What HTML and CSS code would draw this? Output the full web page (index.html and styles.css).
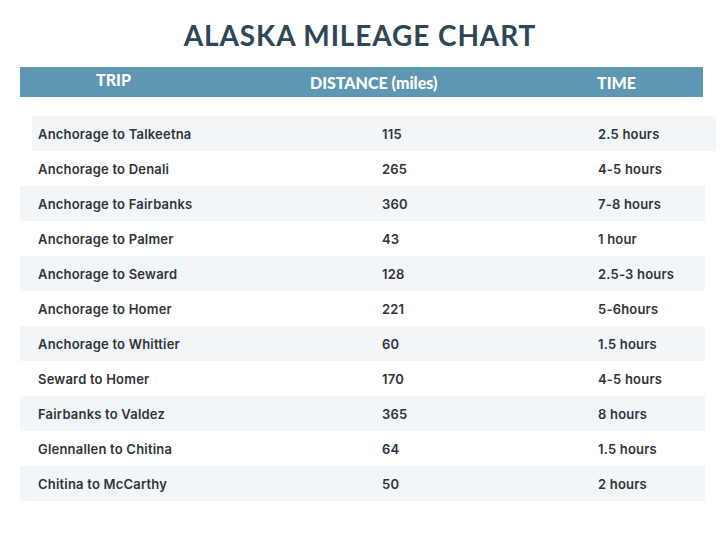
FILE: index.html
```html
<!DOCTYPE html>
<html>
<head>
<meta charset="utf-8">
<link rel="stylesheet" href="styles.css">
</head>
<body>
<div class="page">
  <h1 class="title">ALASKA MILEAGE CHART</h1>
  <div class="head">
    <div class="h-trip">TRIP</div>
    <div class="h-dist">DISTANCE (miles)</div>
    <div class="h-time">TIME</div>
  </div>
  <div class="rows">
    <div class="row alt r1"><span class="trip">Anchorage to Talkeetna</span><span class="dist">115</span><span class="time">2.5 hours</span></div>
    <div class="row"><span class="trip">Anchorage to Denali</span><span class="dist">265</span><span class="time">4-5 hours</span></div>
    <div class="row alt"><span class="trip">Anchorage to Fairbanks</span><span class="dist">360</span><span class="time">7-8 hours</span></div>
    <div class="row"><span class="trip">Anchorage to Palmer</span><span class="dist">43</span><span class="time">1 hour</span></div>
    <div class="row alt"><span class="trip">Anchorage to Seward</span><span class="dist">128</span><span class="time">2.5-3 hours</span></div>
    <div class="row"><span class="trip">Anchorage to Homer</span><span class="dist">221</span><span class="time">5-6hours</span></div>
    <div class="row alt"><span class="trip">Anchorage to Whittier</span><span class="dist">60</span><span class="time">1.5 hours</span></div>
    <div class="row"><span class="trip">Seward to Homer</span><span class="dist">170</span><span class="time">4-5 hours</span></div>
    <div class="row alt"><span class="trip">Fairbanks to Valdez</span><span class="dist">365</span><span class="time">8 hours</span></div>
    <div class="row"><span class="trip">Glennallen to Chitina</span><span class="dist">64</span><span class="time">1.5 hours</span></div>
    <div class="row alt"><span class="trip">Chitina to McCarthy</span><span class="dist">50</span><span class="time">2 hours</span></div>
  </div>
</div>
</body>
</html>
```
FILE: styles.css
```css
* { box-sizing: border-box; }
html, body { margin: 0; padding: 0; background: #ffffff; }
.page { width: 720px; height: 539px; overflow: hidden; }
.title {
  margin: 0;
  padding-top: 17px;
  height: 67px;
  text-align: center;
  font-family: "Lato", "Open Sans", sans-serif;
  font-weight: 700;
  font-size: 28px;
  letter-spacing: 0.9px;
  color: #2e4756;
  line-height: 36px;
}
.head {
  margin: 0 17px 0 20px;
  height: 30px;
  background: #5e97b2;
  display: grid;
  grid-template-columns: 214px 287px 1fr;
  padding-left: 76px;
  align-items: center;
  font-family: "Lato", "Open Sans", sans-serif;
  font-weight: 900;
  font-size: 16px;
  color: #ffffff;
}
.h-trip { margin-top: -6px; }
.rows { margin-top: 19px; }
.row {
  height: 35px;
  display: grid;
  grid-template-columns: 344px 216px 1fr;
  align-items: center;
  margin: 0 15px 0 20px;
  padding-left: 18px;
  font-family: "Inter", "Noto Sans", sans-serif;
  font-weight: 600;
  font-size: 13px;
  letter-spacing: 0.2px;
  color: #2f3338;
}
.row.alt { background: #f3f6f9; }
.row.r1 { margin-left: 32px; margin-right: 4px; padding-left: 6px; }
```
